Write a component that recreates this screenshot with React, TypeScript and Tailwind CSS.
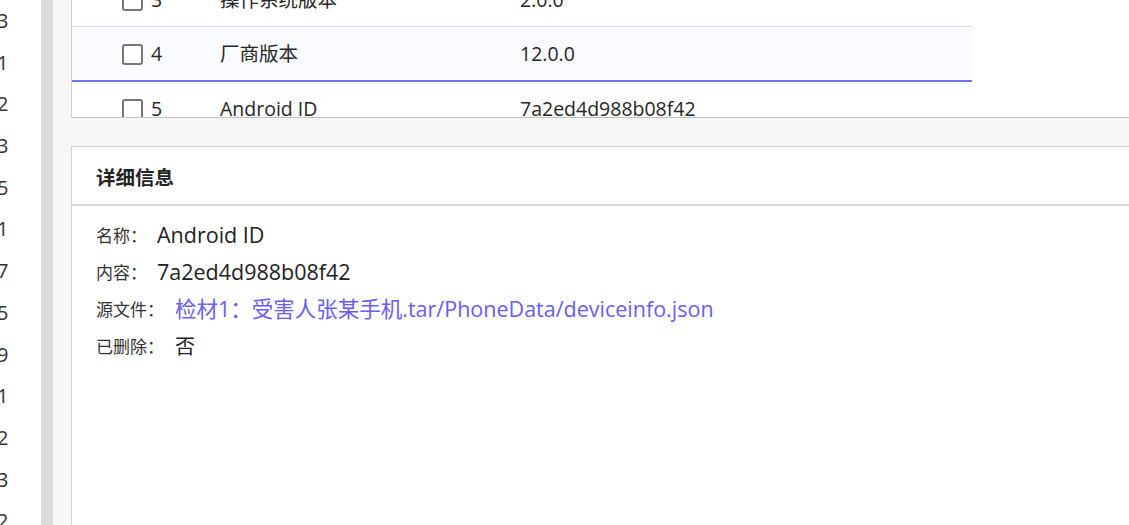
import React from 'react';

const sideNums = ['3', '1', '2', '3', '5', '1', '7', '5', '9', '1', '2', '3', '2'];

const rows = [
  { no: 3, name: '操作系统版本', value: '2.0.0' },
  { no: 4, name: '厂商版本', value: '12.0.0', hover: true },
  { no: 5, name: 'Android ID', value: '7a2ed4d988b08f42' },
];

const Checkbox = () => (
  <span className="inline-block w-[21px] h-[21px] rounded-[3px] border-2 border-[#767676] bg-white" />
);

export default function App() {
  return (
    <div className="flex h-[525px] w-[1129px] overflow-hidden bg-[#f7f7f7] text-[#222] font-['Open_Sans','Noto_Sans_CJK_SC',sans-serif]">
      {/* clipped list of numbers on the far left */}
      <div className="w-[41px] bg-white overflow-hidden">
        <div className="-ml-[3px] text-[20px] text-[#333]">
          {sideNums.map((n, i) => (
            <div key={i} className="h-[41.7px] leading-[41.7px]">{n}</div>
          ))}
        </div>
      </div>
      <div className="w-[12px] bg-[#dcdcdc]" />

      <div className="flex-1 flex flex-col pl-[18px]">
        {/* table panel */}
        <div className="h-[118px] bg-white border-l border-[#d0d0d0] border-b border-b-[#bfc3c7] overflow-hidden">
          <div className="-mt-[27px] w-[900px]">
            {rows.map((r) => (
              <div
                key={r.no}
                className={`flex items-center h-[54px] pt-[1px] text-[19.5px] text-[#262626] ${
                  r.hover ? 'bg-[#fafbff] border-b-2 border-[#7070f2] h-[55px]' : 'border-b border-[#d9d9d9]'
                }`}
              >
                <div className="w-[148px] pl-[50px] flex items-center gap-[8px]">
                  <Checkbox />
                  <span>{r.no}</span>
                </div>
                <div className="w-[300px]">{r.name}</div>
                <div>{r.value}</div>
              </div>
            ))}
          </div>
        </div>

        {/* details panel */}
        <div className="mt-[28px] flex-1 bg-white border-t border-l border-[#d4d4d4]">
          <div className="h-[59px] flex items-center pt-[5px] pl-[24px] border-b-2 border-[#d9d9d9] text-[19.5px] font-bold text-[#222]">
            详细信息
          </div>
          <div className="pl-[24px] pt-[11px] flex flex-col">
            <div className="flex items-center h-[37px]">
              <span className="text-[17px] text-[#333] w-[61px]">名称：</span>
              <span className="text-[21.5px]">Android ID</span>
            </div>
            <div className="flex items-center h-[37px]">
              <span className="text-[17px] text-[#333] w-[61px]">内容：</span>
              <span className="text-[21.5px]">7a2ed4d988b08f42</span>
            </div>
            <div className="flex items-center h-[37px]">
              <span className="text-[17px] text-[#333] w-[79px]">源文件：</span>
              <span className="text-[21.5px] text-[#6b5cf6]">检材1：受害人张某手机.tar/PhoneData/deviceinfo.json</span>
            </div>
            <div className="flex items-center h-[37px]">
              <span className="text-[17px] text-[#333] w-[79px]">已删除：</span>
              <span className="text-[20px]">否</span>
            </div>
          </div>
        </div>
      </div>
    </div>
  );
}
